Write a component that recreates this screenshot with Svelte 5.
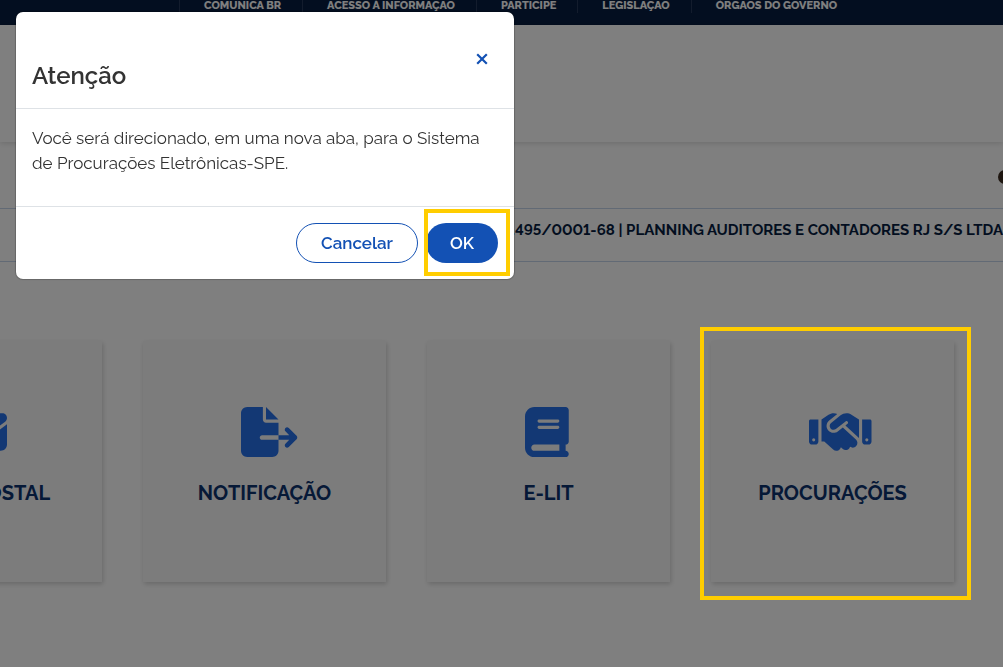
<script lang="ts">
  interface Service {
    title: string
    viewBox: string
    path: string
    highlighted?: boolean
  }

  const links = [
    'COMUNICA BR',
    'ACESSO À INFORMAÇÃO',
    'PARTICIPE',
    'LEGISLAÇÃO',
    'ÓRGÃOS DO GOVERNO',
  ]

  const services: Service[] = [
    {
      title: 'CAIXA POSTAL',
      viewBox: '0 0 512 512',
      path: 'M48 64C21.5 64 0 85.5 0 112c0 15.1 7.1 29.3 19.2 38.4L236.8 313.6c11.4 8.5 27 8.5 38.4 0L492.8 150.4c12.1-9.1 19.2-23.3 19.2-38.4c0-26.5-21.5-48-48-48H48zM0 176V384c0 35.3 28.7 64 64 64H448c35.3 0 64-28.7 64-64V176L294.4 339.2c-22.8 17.1-54 17.1-76.8 0L0 176z',
    },
    {
      title: 'NOTIFICAÇÃO',
      viewBox: '0 0 576 512',
      path: 'M0 64C0 28.7 28.7 0 64 0H224V128c0 17.7 14.3 32 32 32H384V288H216c-13.3 0-24 10.7-24 24s10.7 24 24 24H384V448c0 35.3-28.7 64-64 64H64c-35.3 0-64-28.7-64-64V64zM384 336V288H494.1l-39-39c-9.4-9.4-9.4-24.6 0-33.9s24.6-9.4 33.9 0l80 80c9.4 9.4 9.4 24.6 0 33.9l-80 80c-9.4 9.4-24.6 9.4-33.9 0s-9.4-24.6 0-33.9l39-39H384zm0-208H256V0L384 128z',
    },
    {
      title: 'E-LIT',
      viewBox: '0 0 448 512',
      path: 'M96 0C43 0 0 43 0 96V416c0 53 43 96 96 96H384h32c17.7 0 32-14.3 32-32s-14.3-32-32-32V384c17.7 0 32-14.3 32-32V32c0-17.7-14.3-32-32-32H384 96zm0 384H352v64H96c-17.7 0-32-14.3-32-32s14.3-32 32-32zm32-240c0-8.8 7.2-16 16-16H336c8.8 0 16 7.2 16 16s-7.2 16-16 16H144c-8.8 0-16-7.2-16-16zm16 48H336c8.8 0 16 7.2 16 16s-7.2 16-16 16H144c-8.8 0-16-7.2-16-16s7.2-16 16-16z',
    },
    {
      title: 'PROCURAÇÕES',
      viewBox: '0 0 640 512',
      path: 'M323.4 85.2l-96.8 78.4c-16.1 13-19.2 36.4-7 53.1c12.9 17.8 38 21.3 55.3 7.8l99.3-77.2c7-5.4 17-4.2 22.5 2.8s4.2 17-2.8 22.5l-20.9 16.2L512 316.8V128h-.7l-3.9-2.5L434.8 79c-15.3-9.8-33.2-15-51.4-15c-21.8 0-43 7.5-60 21.2zm22.8 124.4l-51.7 40.2C263 274.3 217.3 268 193.7 235.6c-22.2-30.5-16.6-73.1 12.7-96.8l83.2-67.3c-11.6-4.9-24.1-7.4-36.8-7.4C234 64 215.7 69.6 200 80l-72 48V352h28.2l91.4 83.4c19.6 17.9 49.9 16.5 67.8-3.1c5.5-6.1 9.2-13.2 11.1-20.6l17 15.6c19.5 17.9 49.9 16.6 67.8-2.9c4.5-4.9 7.8-10.6 9.9-16.5c19.4 13 45.8 10.3 62.1-7.5c17.9-19.5 16.6-49.9-2.9-67.8l-134.2-123zM16 128c-8.8 0-16 7.2-16 16V352c0 17.7 14.3 32 32 32H64c17.7 0 32-14.3 32-32V128H16zM48 320a16 16 0 1 1 0 32 16 16 0 1 1 0-32zM544 128V352c0 17.7 14.3 32 32 32h32c17.7 0 32-14.3 32-32V144c0-8.8-7.2-16-16-16H544zm32 208a16 16 0 1 1 32 0 16 16 0 1 1-32 0z',
      highlighted: true,
    },
  ]

  let open = $state(true)

  function close() {
    open = false
  }
</script>

<div class="page">
  <nav class="govbar">
    {#each links as link}
      <a href="#top">{link}</a>
    {/each}
  </nav>

  <header class="header"></header>

  <div class="profile">
    <span class="avatar"></span>
  </div>

  <div class="company">.495/0001-68 | PLANNING AUDITORES E CONTADORES RJ S/S LTDA</div>

  <main class="services">
    {#each services as service}
      <a class="card" href="#services">
        <span class="icon">
          <svg viewBox={service.viewBox} aria-hidden="true">
            <path d={service.path} />
          </svg>
        </span>
        <span class="title">{service.title}</span>
        {#if service.highlighted}
          <span class="marker marker-card"></span>
        {/if}
      </a>
    {/each}
  </main>
</div>

{#if open}
  <div class="backdrop"></div>
  <div class="modal" role="dialog" aria-modal="true" aria-labelledby="modal-title">
    <div class="modal-header">
      <h2 id="modal-title">Atenção</h2>
      <button class="close" type="button" aria-label="Fechar" onclick={close}>
        <svg viewBox="0 0 12 12" aria-hidden="true">
          <path d="M1.2 1.2L10.8 10.8M10.8 1.2L1.2 10.8" />
        </svg>
      </button>
    </div>
    <div class="modal-body">
      <p>Você será direcionado, em uma nova aba, para o Sistema de Procurações Eletrônicas-SPE.</p>
    </div>
    <div class="modal-footer">
      <button class="btn secondary" type="button" onclick={close}>Cancelar</button>
      <div class="confirm">
        <button class="btn primary" type="button" onclick={close}>OK</button>
        <span class="marker marker-ok"></span>
      </div>
    </div>
  </div>
{/if}

<style>
  :global(body) {
    margin: 0;
    background: #fff;
    color: #333;
    font-family: Raleway, Lato, 'Open Sans', sans-serif;
    font-size: 17px;
    font-variant-numeric: lining-nums;
  }

  .page {
    min-height: 100vh;
    overflow: hidden;
  }

  .govbar {
    display: flex;
    align-items: flex-start;
    padding: 0 0 12px 179px;
    background: #071d41;
  }

  .govbar a {
    padding: 0 21px 1px 24px;
    border-left: 1px solid #26385a;
    color: #fff;
    font-size: 11px;
    font-weight: 800;
    line-height: 12px;
    text-decoration: none;
    white-space: nowrap;
  }

  .header {
    height: 117px;
    box-shadow: 0 1px 6px rgba(0, 0, 0, 0.16);
  }

  .profile {
    display: flex;
    align-items: center;
    justify-content: flex-end;
    height: 66px;
  }

  .avatar {
    width: 14px;
    height: 14px;
    margin: 4px -9px 0 0;
    border-radius: 50%;
    background: #3c2c20;
  }

  .company {
    display: flex;
    justify-content: flex-end;
    padding: 9px 0 19px;
    border-top: 1px solid #c5d4eb;
    border-bottom: 1px solid #c5d4eb;
    color: #071d41;
    font-size: 15px;
    font-weight: 700;
    line-height: 24px;
    white-space: nowrap;
  }

  /* the first card runs past the left edge of the window */
  .services {
    display: grid;
    grid-template-columns: repeat(4, 1fr);
    gap: 41px;
    margin: 79px 49px 48px -141px;
  }

  .card {
    position: relative;
    display: flex;
    flex-direction: column;
    align-items: center;
    gap: 21px;
    padding: 66px 0 74px;
    background: #f8f8f8;
    box-shadow: 1px 2px 5px rgba(0, 0, 0, 0.18);
    color: #0c326f;
    text-decoration: none;
  }

  /* wide icons start at the same left edge and overflow the box */
  .icon {
    width: 48px;
    height: 50px;
  }

  .icon svg {
    display: block;
    width: auto;
    height: 100%;
    overflow: visible;
    fill: #2670e8;
  }

  .title {
    font-size: 20px;
    font-weight: 700;
    line-height: 30px;
  }

  .backdrop {
    position: fixed;
    inset: 0;
    z-index: 1;
    background: rgba(0, 0, 0, 0.5);
  }

  .modal {
    position: fixed;
    top: 12px;
    left: 16px;
    z-index: 3;
    width: calc(100% - 32px);
    max-width: 498px;
    border-radius: 7px;
    background: #fff;
    box-shadow: 0 0 1px 1px rgba(0, 0, 0, 0.2);
  }

  .modal-header {
    display: flex;
    align-items: flex-start;
    justify-content: space-between;
    padding: 31px 16px 15px;
    border-bottom: 1px solid #dee2e6;
  }

  h2 {
    margin: 16px 0 0;
    font-size: 24px;
    font-weight: 600;
    line-height: 34px;
  }

  .close {
    display: flex;
    align-items: center;
    justify-content: center;
    width: 32px;
    height: 32px;
    padding: 0;
    border: 0;
    background: none;
    cursor: pointer;
  }

  .close svg {
    width: 12px;
    height: 12px;
    fill: none;
    stroke: #1351b4;
    stroke-width: 2.2;
  }

  .modal-body {
    padding: 17px 16px 30px;
  }

  p {
    margin: 0;
    line-height: 25px;
  }

  .modal-footer {
    display: flex;
    justify-content: flex-end;
    gap: 8px;
    padding: 16px;
    border-top: 1px solid #dee2e6;
  }

  .btn {
    height: 40px;
    padding: 0 24px;
    border: 0;
    border-radius: 20px;
    font-family: inherit;
    font-size: 17px;
    font-weight: 600;
    cursor: pointer;
  }

  .secondary {
    border: 1px solid #1351b4;
    background: #fff;
    color: #1351b4;
  }

  .primary {
    background: #1351b4;
    color: #fff;
  }

  .confirm {
    position: relative;
  }

  .marker {
    position: absolute;
    border: 4px solid #ffcd00;
    pointer-events: none;
  }

  .marker-card {
    inset: -14px -17px -18px -11px;
    z-index: 2;
  }

  .marker-ok {
    inset: -14px -12px -13px -2px;
  }
</style>
